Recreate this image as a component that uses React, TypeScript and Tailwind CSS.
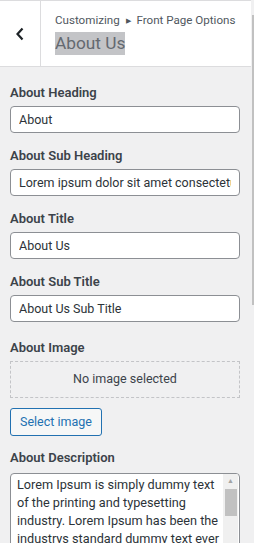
const FONT = { fontFamily: 'Roboto, "Noto Sans", sans-serif' };

function Field({ label, value }: { label: string; value: string }) {
  return (
    <div className="mb-[13px]">
      <div className="text-[13px] font-semibold leading-[20px] text-[#3c434a] mb-[3px]">{label}</div>
      <input
        readOnly
        value={value}
        className="block w-[230px] h-[27px] rounded-[4px] border border-[#8c8f94] bg-white px-[8px] text-[12.5px] text-[#2c3338] outline-none"
        style={FONT}
      />
    </div>
  );
}

export default function App() {
  const desc =
    'Lorem Ipsum is simply dummy text of the printing and typesetting industry. Lorem Ipsum has been the industrys standard dummy text ever since the 1500s, when an unknown printer took a galley of type and scrambled it to make a type specimen book.';

  return (
    <div className="relative w-[254px] h-[543px] overflow-hidden bg-[#f0f0f1]" style={FONT}>
      <div className="w-[251px] h-[67px] flex border-t border-b border-[#dcdcde] bg-white">
        <button className="w-[41px] shrink-0 border-r border-[#dcdcde] flex items-center justify-center">
          <svg width="10" height="14" viewBox="0 0 10 14">
            <path d="M7.5 1.5 L2.5 7 L7.5 12.5" fill="none" stroke="#1d2327" strokeWidth="2.2" />
          </svg>
        </button>
        <div className="pl-[14px] pt-[10px]">
          <div className="text-[11.6px] leading-[18px] text-[#50575e] whitespace-nowrap">
            Customizing <span className="text-[7px] align-middle mx-[3px]">▶</span> Front Page Options
          </div>
          <div className="text-[17.3px] leading-[23px] text-[#646970] mt-[2px]">
            <span className="bg-[#c3c4c7] inline-block">About Us</span>
          </div>
        </div>
      </div>

      <div className="pl-[10px] pt-[16px]">
        <Field label="About Heading" value="About" />
        <Field label="About Sub Heading" value="Lorem ipsum dolor sit amet consectetur adipiscing" />
        <Field label="About Title" value="About Us" />
        <Field label="About Sub Title" value="About Us Sub Title" />

        <div className="text-[13px] font-semibold leading-[20px] text-[#3c434a] mt-[16px] mb-[3px]">About Image</div>
        <div className="w-[230px] h-[37px] border border-dashed border-[#c3c4c7] flex items-center justify-center text-[12.5px] text-[#3c434a]">
          No image selected
        </div>
        <button className="mt-[10px] h-[28px] px-[9px] rounded-[3px] border border-[#2271b1] bg-[#f6f7f7] text-[12.5px] text-[#2271b1]">
          Select image
        </button>

        <div className="text-[13px] font-semibold leading-[20px] text-[#3c434a] mt-[12px] mb-[5px]">About Description</div>
        <div className="w-[230px] h-[90px] rounded-[4px] border border-[#8c8f94] bg-white overflow-hidden flex">
          <div className="flex-1 pl-[6px] pr-[1px] pt-[2px] text-[12.7px] leading-[18px] text-[#2c3338]">{desc}</div>
          <div className="w-[15px] shrink-0 mr-[1px] bg-[#f0f0f0] flex flex-col items-center">
            <div className="h-[15px] flex items-center justify-center text-[7px] text-[#a3a3a3]">▲</div>
            <div className="w-[12px] h-[27px] bg-[#c1c1c1]" />
            <div className="flex-1" />
            <div className="h-[15px] flex items-center justify-center text-[7px] text-[#505050]">▼</div>
          </div>
        </div>
      </div>

      <div className="absolute right-0 top-[15px] w-[2px] h-[290px] bg-[#c1c1c1]" />
    </div>
  );
}
